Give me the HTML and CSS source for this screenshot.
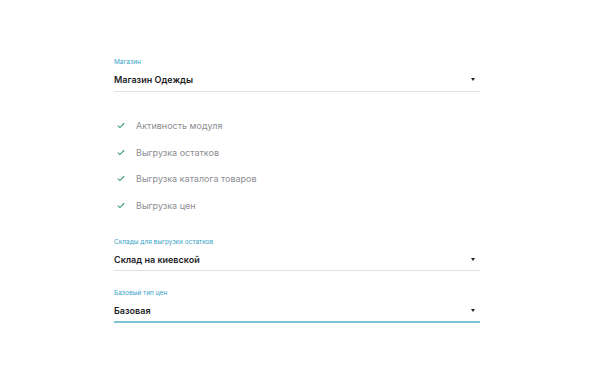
FILE: index.html
```html
<!DOCTYPE html>
<html>
<head>
<meta charset="utf-8">
<link rel="stylesheet" href="styles.css">
</head>
<body>
<div class="form">
  <div class="field">
    <div class="label">Магазин</div>
    <div class="select s1"><span class="value">Магазин Одежды</span><span class="caret"></span></div>
  </div>
  <ul class="checks">
    <li><svg class="check" viewBox="0 0 10 8"><path d="M1 4.2 L3.6 6.6 L9 1.2" fill="none" stroke="#3f9a7a" stroke-width="1.4"/></svg>Активность модуля</li>
    <li><svg class="check" viewBox="0 0 10 8"><path d="M1 4.2 L3.6 6.6 L9 1.2" fill="none" stroke="#3f9a7a" stroke-width="1.4"/></svg>Выгрузка остатков</li>
    <li><svg class="check" viewBox="0 0 10 8"><path d="M1 4.2 L3.6 6.6 L9 1.2" fill="none" stroke="#3f9a7a" stroke-width="1.4"/></svg>Выгрузка каталога товаров</li>
    <li><svg class="check" viewBox="0 0 10 8"><path d="M1 4.2 L3.6 6.6 L9 1.2" fill="none" stroke="#3f9a7a" stroke-width="1.4"/></svg>Выгрузка цен</li>
  </ul>
  <div class="field f2">
    <div class="label">Склады для выгрузки остатков</div>
    <div class="select"><span class="value">Склад на киевской</span><span class="caret"></span></div>
  </div>
  <div class="field f3">
    <div class="label">Базовый тип цен</div>
    <div class="select active"><span class="value">Базовая</span><span class="caret"></span></div>
  </div>
</div>
</body>
</html>
```
FILE: styles.css
```css
html, body {
  margin: 0;
  background: #fff;
  font-family: Inter, "Noto Sans", sans-serif;
}
.form {
  width: 366px;
  margin-left: 114px;
  padding-top: 57px;
}
.label {
  font-size: 6.5px;
  color: #3aa3c8;
  line-height: 10px;
}
.select {
  display: flex;
  align-items: center;
  justify-content: space-between;
  height: 24px;
  padding-top: 1px;
  border-bottom: 1px solid #e2e2e2;
  box-sizing: border-box;
}
.select.s1 {
  height: 25px;
}
.select.active {
  border-bottom: 2px solid #7dc3d4;
  height: 25px;
}
.value {
  font-size: 9px;
  font-weight: 600;
  color: #1d1d25;
}
.caret {
  width: 0;
  height: 0;
  border-left: 2.5px solid transparent;
  border-right: 2.5px solid transparent;
  border-top: 3px solid #222;
  margin-right: 5px;
}
.checks {
  list-style: none;
  margin: 0;
  padding: 20px 0 0 3px;
}
.checks li {
  display: flex;
  align-items: center;
  height: 26.7px;
  font-size: 9px;
  color: #8e8e92;
}
.check {
  width: 8px;
  height: 7px;
  margin-right: 11px;
}
.f2 { margin-top: 18.5px; }
.f3 { margin-top: 17px; }
```
